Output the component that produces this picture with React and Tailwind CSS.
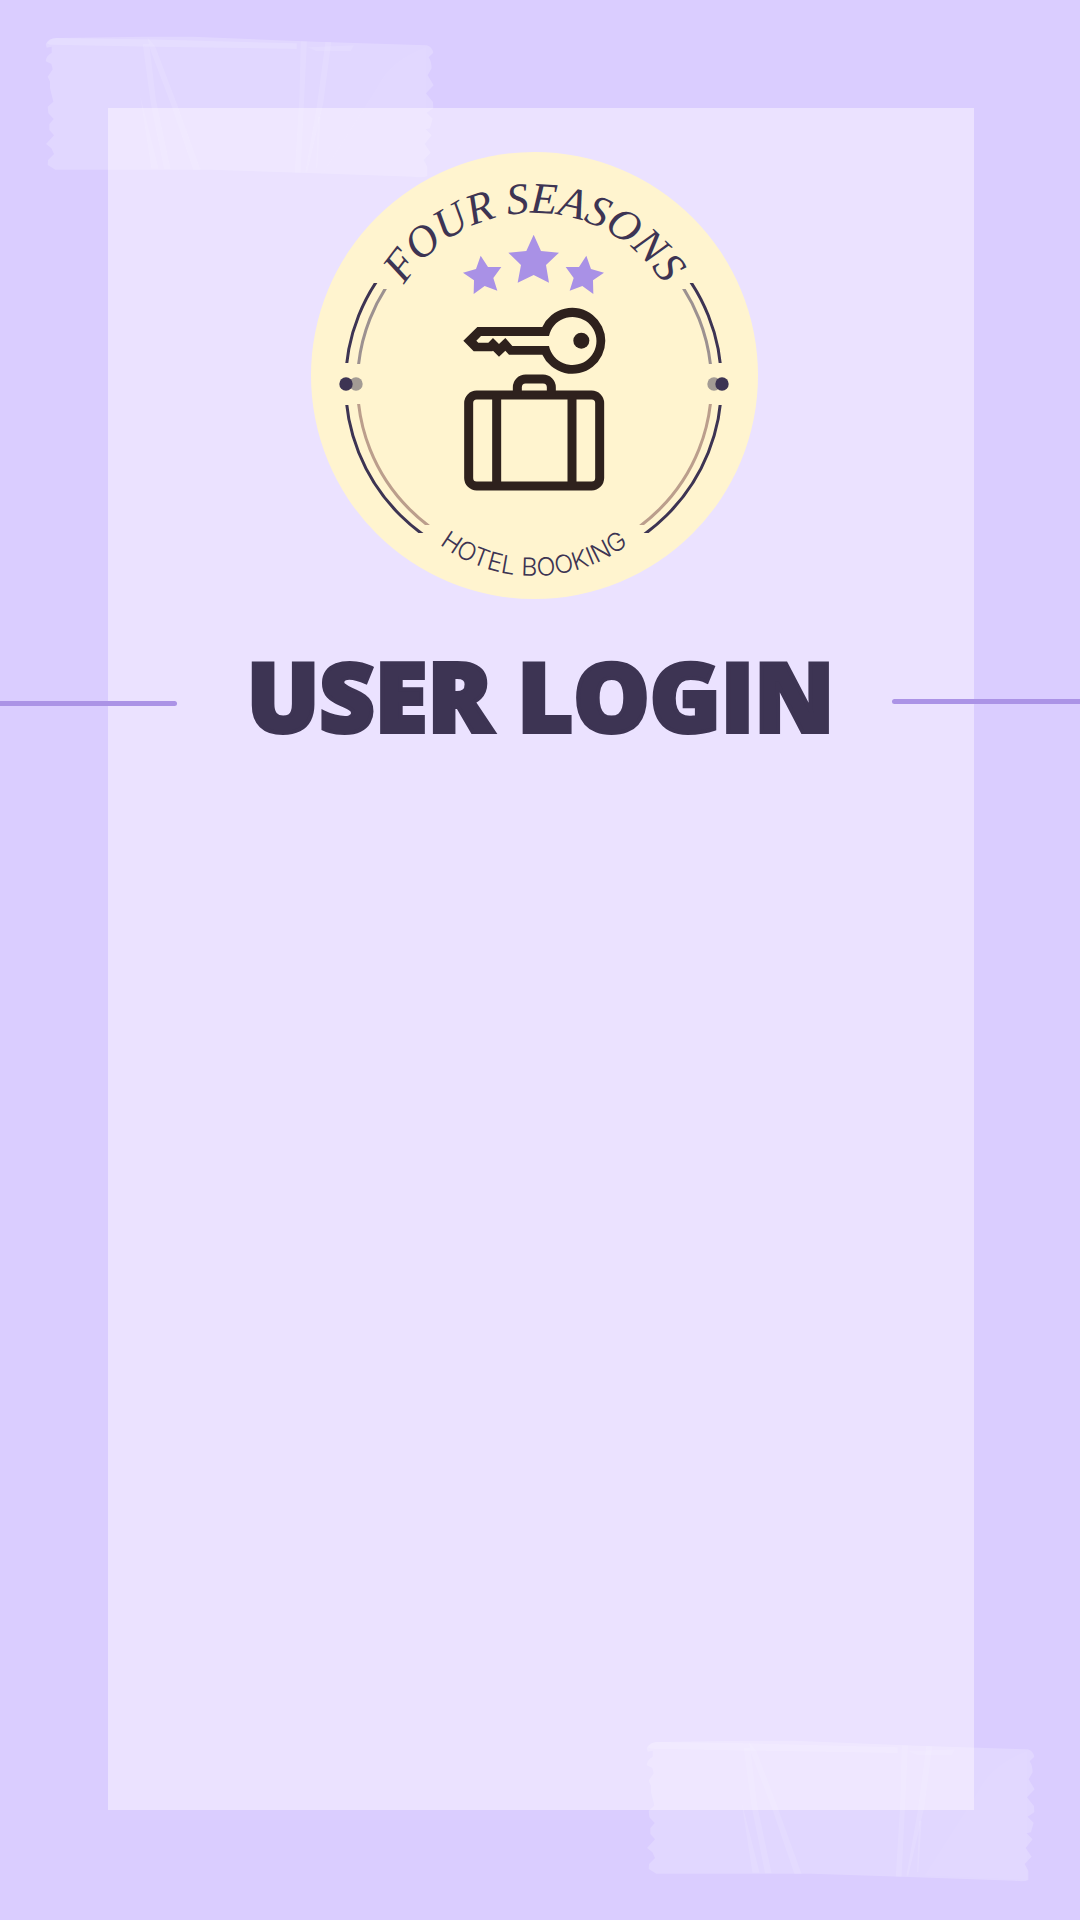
function Tape({ className }) {
  return (
    <svg
      className={`pointer-events-none absolute h-[170px] w-[420px] ${className}`}
      viewBox="0 0 1260 510"
      fill="#ffffff"
      aria-hidden="true"
    >
      <path
        fillOpacity="0.2"
        d="M47 72Q56 54 78 54L340 50H490L860 65L1190 76Q1206 80 1210 98L1196 112Q1204 122 1205 145L1193 166L1211 196L1188 220L1209 246L1210 265L1190 278L1208 296L1200 325L1187 328L1205 346L1184 372L1202 398L1181 420L1192 440V468Q1180 474 1150 470L810 458L540 449H76L53 435L54 420L72 402L64 385L48 372L72 346L58 330V312L71 297L55 280L53 260L70 245L60 205V185L53 170L68 148L64 132L47 124Q48 108 65 98V80L50 83Z"
      />
      <g fillOpacity="0.1">
        <path
          fillOpacity="0.15"
          d="M50 70Q60 54 80 54L350 58L800 70V87L360 80L60 74Z"
        />
        <path d="M338 72H358L378 240L422 448H402L362 250Z" />
        <path d="M352 52L376 80L440 250L512 450H490L426 262L362 92Z" />
        <path d="M330 225L386 446H364Z" />
        <path d="M812 64H831L812 458H794L808 230Z" />
        <path d="M886 66H904L880 250L832 455H826L860 260Z" />
        <path d="M832 82L972 76L962 94H860Z" />
      </g>
      <path fillOpacity="0.04" d="M1190 80Q1080 120 1040 205L880 455L1190 468Z" />
      <path fillOpacity="0.1" d="M864 290H872L862 445H858Z" />
    </svg>
  );
}

const SMALL_STAR =
  "122,107 144,141 184,141 160,174 172,212 134,198 101,222 102,181 69,158 108,147";

function Logo() {
  return (
    <svg
      className="relative w-[447px] max-w-full"
      viewBox="311 152 447 447"
      role="img"
      aria-label="Four Seasons Hotel Booking"
    >
      <defs>
        <path id="arc-top" d="M381 366A153 153 0 0 1 687 366" />
        <path id="arc-bottom" d="M377 419A157 157 0 0 0 691 419" />
        <clipPath id="outer-band">
          <path d="M311 283H758V363H311ZM311 405H758V533H311Z" />
        </clipPath>
        <clipPath id="inner-upper">
          <path d="M311 289H758V364H311Z" />
        </clipPath>
        <clipPath id="inner-lower">
          <path d="M311 404H758V525H311Z" />
        </clipPath>
      </defs>
      <circle cx="534.5" cy="375.5" r="223.5" fill="#fff4cf" />
      <g fill="none" strokeWidth="3">
        <ellipse
          cx="533.5"
          cy="384"
          rx="188"
          ry="186"
          stroke="#3d3453"
          clipPath="url(#outer-band)"
        />
        <circle cx="534.5" cy="384" r="177" stroke="#9c9190" clipPath="url(#inner-upper)" />
        <circle cx="534.5" cy="384" r="177" stroke="#bb9e8c" clipPath="url(#inner-lower)" />
      </g>
      <circle cx="356" cy="384" r="6.7" fill="#a39b94" />
      <circle cx="346" cy="384" r="6.7" fill="#3d3453" />
      <circle cx="714" cy="384" r="6.7" fill="#a39b94" />
      <circle cx="722" cy="384" r="6.7" fill="#3d3453" />

      <text
        className="font-['Liberation_Serif',serif] text-[44px] italic"
        fill="#3d3453"
        textAnchor="middle"
      >
        <textPath href="#arc-top" startOffset="50%">FOUR SEASONS</textPath>
      </text>
      <text
        className="font-['Inter',sans-serif] text-[25px] font-light"
        fill="#3d3453"
        textAnchor="middle"
      >
        <textPath href="#arc-bottom" startOffset="50%">HOTEL BOOKING</textPath>
      </text>

      <g transform="translate(440 220) scale(0.33333)">
        <g fill="#a991e6">
          <polygon points="281,44 303,93 357,98 318,135 327,188 281,165 233,188 243,135 205,98 259,93" />
          <polygon points={SMALL_STAR} />
          <polygon points={SMALL_STAR} transform="translate(561 0) scale(-1 1)" />
        </g>
        <path
          fill="#2e211d"
          fillRule="evenodd"
          d="M70 362L112 321H307A99 99 0 1 1 307 404H207L196 392L177 410L159 392L157 394H101ZM109 362L123 348H327A72 72 0 1 1 327 378H217L196 354L177 372L159 354L145 368H115Z"
        />
        <circle cx="424" cy="362" r="24" fill="#2e211d" />
        <g fill="none" stroke="#2e211d" strokeWidth="27">
          <rect x="86" y="525" width="393" height="273" rx="24" />
          <path d="M170 525V798M396 525V798" />
          <path d="M232 525V502A25 25 0 0 1 257 477H309A25 25 0 0 1 334 502V525" />
        </g>
      </g>
    </svg>
  );
}

export default function App() {
  return (
    <main className="relative flex min-h-screen flex-col overflow-hidden bg-[#dacdff] pt-[108px] pb-[110px]">
      <Tape className="top-5 left-[30px]" />
      <Tape className="right-[29px] bottom-[26px]" />
      <section className="mr-[106px] ml-[108px] flex flex-1 flex-col bg-[#ebe2ff]">
        <div className="flex justify-center pt-11 pr-3.5">
          <Logo />
        </div>
        <div className="mt-10 -mr-[106px] -ml-[108px] grid grid-cols-[177px_1fr_188px] items-center">
          <span className="mt-1 h-[5px] rounded-r-full bg-[#ab93e6]" />
          <h1 className="pb-3 pl-3 text-center font-['Open_Sans',sans-serif] text-[96px] leading-[112px] font-extrabold whitespace-nowrap text-[#3d3453] [-webkit-text-stroke:4px_#3d3453]">
            USER LOGIN
          </h1>
          <span className="h-[5px] rounded-l-full bg-[#ab93e6]" />
        </div>
      </section>
    </main>
  );
}
